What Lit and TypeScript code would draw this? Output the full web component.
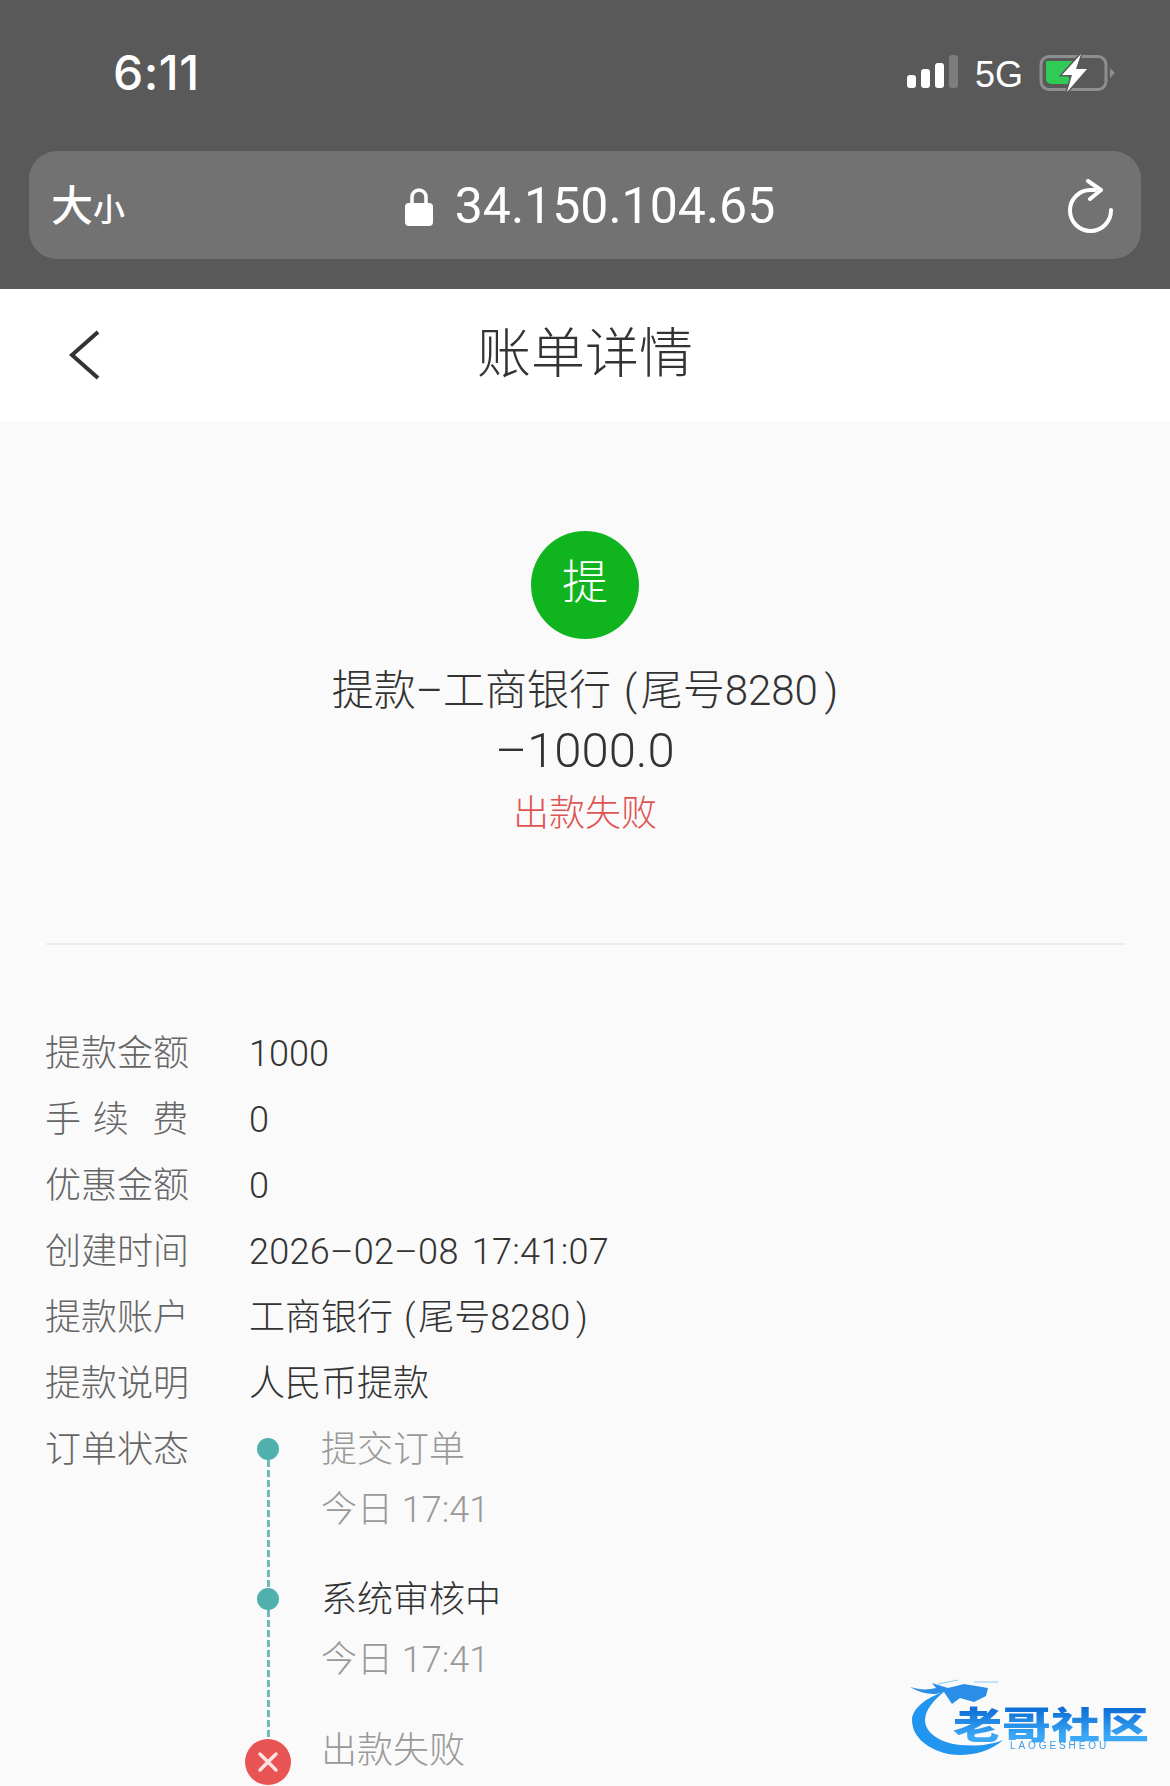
import { LitElement, html, css } from "lit";
import { customElement } from "lit/decorators.js";

const steps = [
  { title: "提交订单", time: "今日 17:41", dark: false },
  { title: "系统审核中", time: "今日 17:41", dark: true },
];
const paren = (t: string) => html`<span class="po">(</span>${t}<span class="pc">)</span>`;
const rows: [string, unknown, string?][] = [
  ["提款金额", "1000"],
  ["手 续  费", "0"],
  ["优惠金额", "0"],
  ["创建时间", "2026–02–08 17:41:07", "date"],
  ["提款账户", html`工商银行 ${paren("尾号8280")}`],
  ["提款说明", "人民币提款"],
];

@customElement("app-root")
export class AppRoot extends LitElement {
  static styles = css`
    :host {
      display: block;
      position: relative;
      width: 1170px;
      height: 1786px;
      overflow: hidden;
      background: #fafafa;
      font-family: Roboto, "Noto Sans CJK SC", sans-serif;
      font-weight: 300;
      color: #333;
    }
    .chrome { height: 289px; background: #595959; color: #fff; padding: 0 29px; box-sizing: border-box; display: flex; flex-direction: column; }
    .status { height: 151px; display: flex; align-items: flex-start; }
    .time { margin: 43px 0 0 84px; font: 500 48px/60px Inter, sans-serif; letter-spacing: 0.5px; flex: 1; }
    .sys { margin: 54px 26px 0 0; display: flex; align-items: flex-start; }
    .net { font: 400 36px/36px "Liberation Sans", sans-serif; margin: 3px 16px 0 17px; }
    .addr { height: 108px; border-radius: 28px; background: #727272; display: flex; align-items: center; position: relative; padding: 0 27px 0 22px; }
    .size { font-family: "Noto Sans CJK SC", sans-serif; font-weight: 500; font-size: 42px; line-height: 60px; }
    .size small { font-size: 32px; }
    .url { flex: 1; display: flex; align-items: center; justify-content: center; gap: 22px; font: 400 50px/60px Roboto, sans-serif; margin: 2px 0 0 -13px; }
    .reload { margin-top: 4px; }
    .nav { height: 132px; background: #fff; display: flex; align-items: center; padding-left: 68px; position: relative; }
    .nav h1 { position: absolute; left: 0; right: 0; top: 31px; margin: 0; text-align: center; font-family: "Noto Sans CJK SC", sans-serif; font-size: 54px; line-height: 60px; font-weight: 300; color: #333; }
    .hero { display: flex; flex-direction: column; align-items: center; padding-top: 110px; }
    .badge { width: 108px; height: 108px; border-radius: 50%; background: #0fb41e; color: #fff; display: flex; align-items: center; justify-content: center; font-size: 46px; line-height: 102px; margin-bottom: 22px; }
    .badge span { display: block; margin-top: -6px; }
    .hero-title { font-size: 42px; line-height: 60px; white-space: nowrap; }
    .amount { font-size: 49px; line-height: 60px; }
    .state { font-size: 36px; line-height: 62px; color: #e05353; padding-top: 2px; margin-bottom: -2px; }
    .divider { height: 2px; background: #ececec; margin: 100px 44px 76px 46px; }
    .list { padding-left: 45px; font-size: 36px; }
    .row { display: flex; line-height: 66px; }
    .label { width: 204px; color: #666; flex: none; white-space: pre; word-spacing: 3px; }
    .date { letter-spacing: 0.3px; word-spacing: 4px; }
    .po { margin-left: 0.06em; margin-right: 0.08em; }
    .pc { margin-left: 0.16em; }
    .timeline { padding-top: 3px; line-height: 60px; color: #999; }
    .step { display: flex; height: 150px; }
    .step.last { height: 80px; }
    .rail { width: 38px; margin-right: 34px; display: flex; flex-direction: column; align-items: center; }
    .dot { width: 22px; height: 22px; border-radius: 50%; background: #4fb0ac; margin-top: 18px; flex: none; }
    .line { flex: 1; width: 3px; margin-bottom: -18px; background: repeating-linear-gradient(#6dbcb8 0 7px, transparent 7px 10px); }
    .short { height: 19px; flex: none; margin: 0; }
    .fail { width: 46px; height: 46px; flex: none; }
    .ink { color: #333; }
    .last .body { margin-top: 1px; }
    .logo { position: absolute; left: 908px; top: 1678px; width: 246px; height: 80px; filter: blur(0.6px); }
    .logo svg { position: absolute; inset: 0; }
    .logo-cn { position: absolute; left: 45px; top: 28px; font: 900 49px/34px "Noto Sans CJK SC", sans-serif; white-space: nowrap; transform: scaleY(0.76); }
    .logo-cn span { background: linear-gradient(#0f6fd6 25%, #3aa8f6 75%); -webkit-background-clip: text; background-clip: text; color: transparent; }
    .logo-en { position: absolute; left: 102px; top: 63px; font: 500 10px/10px "Liberation Sans", sans-serif; letter-spacing: 2.9px; color: #3f9ce8; }
  `;

  render() {
    return html`
      <div class="chrome">
        <div class="status">
          <div class="time">6:11</div>
          <div class="sys">
            <svg width="51" height="36" viewBox="0 0 51 36">
              <rect x="0" y="21" width="9" height="13" rx="3" fill="#fff" />
              <rect x="14" y="15" width="9" height="19" rx="3" fill="#fff" />
              <rect x="28" y="9" width="9" height="25" rx="3" fill="#fff" />
              <rect x="42" y="1" width="9" height="33" rx="3" fill="#7d7d7d" />
            </svg>
            <span class="net">5G</span>
            <svg width="76" height="38" viewBox="0 0 76 38">
              <rect x="2" y="2.500" width="65" height="33" rx="8" fill="none" stroke="#8e8e8e" stroke-width="3" />
              <path d="M7 7h29l-11 11 7 8-2 4H12a5 5 0 0 1-5-5z" fill="#2fcb55" />
              <path d="M71 14l5 5-5 5z" fill="#8e8e8e" />
              <path d="M42 0L23 21h10l-5 17 20-23H37z" fill="#fff" stroke="#595959" stroke-width="3" paint-order="stroke" />
            </svg>
          </div>
        </div>
        <div class="addr">
          <div class="size">大<small>小</small></div>
          <div class="url">
            <svg width="28" height="39" viewBox="0 0 28 39">
              <path d="M7 17v-7a7 7 0 0 1 14 0v7" fill="none" stroke="#fff" stroke-width="3.500" />
              <rect x="0" y="16" width="28" height="23" rx="4" fill="#fff" />
            </svg>
            <span>34.150.104.65</span>
          </div>
          <svg class="reload" width="46" height="56" viewBox="0 0 46 56">
            <path d="M43 31A20.500 20.500 0 1 1 23 11h4" fill="none" stroke="#fff" stroke-width="4" stroke-linecap="round" />
            <path d="M20 2l13 9-11 9" fill="none" stroke="#fff" stroke-width="4" stroke-linecap="round" stroke-linejoin="round" />
          </svg>
        </div>
      </div>

      <div class="nav">
        <svg width="34" height="50" viewBox="0 0 34 50">
          <path d="M30 2L4 25l26 23" fill="none" stroke="#333" stroke-width="4" />
        </svg>
        <h1>账单详情</h1>
      </div>

      <div class="hero">
        <div class="badge"><span>提</span></div>
        <div class="hero-title">提款–工商银行 ${paren("尾号8280")}</div>
        <div class="amount">–1000.0</div>
        <div class="state">出款失败</div>
      </div>
      <div class="divider"></div>

      <div class="list">
        ${rows.map(
          ([k, v, c]) => html`<div class="row"><div class="label">${k}</div><div class=${c ?? ""}>${v}</div></div>`
        )}
        <div class="row">
          <div class="label">订单状态</div>
          <div class="timeline">
            ${steps.map(
              (s) => html`<div class="step">
                <div class="rail"><div class="dot"></div><div class="line"></div></div>
                <div class="body">
                  <div class=${s.dark ? "ink" : ""}>${s.title}</div>
                  <div>${s.time}</div>
                </div>
              </div>`
            )}
            <div class="step last">
              <div class="rail">
                <div class="line short"></div>
                <svg class="fail" viewBox="0 0 46 46">
                  <circle cx="23" cy="23" r="23" fill="#e85454" />
                  <path d="M15 15l16 16M31 15L15 31" stroke="#fbe3e3" stroke-width="3.500" stroke-linecap="round" />
                </svg>
              </div>
              <div class="body">出款失败</div>
            </div>
          </div>
        </div>
      </div>

      <div class="logo">
        <svg width="246" height="80" viewBox="0 0 246 80">
          <path d="M36 14C16 20 4 32 4 42c0 22 26 35 48 35 16 0 32-5 43-15-15 6-29 6-43 5C34 65 17 56 17 42c0-10 9-20 19-28z" fill="#2196ee" />
          <path d="M2 9c10 3 18 3 26 1l-4-5 16 5 16-4 24 4-2 8-12 6-14-4-8 6-8-12C26 18 14 16 2 9z" fill="#2a8ee8" />
          <path d="M30 6l20-4M66 4l24 0" stroke="#8ccaf5" stroke-width="1" fill="none" />
        </svg>
        <div class="logo-cn"><span>老哥社区</span></div>
        <div class="logo-en">LAOGESHEOU</div>
      </div>
    `;
  }
}
